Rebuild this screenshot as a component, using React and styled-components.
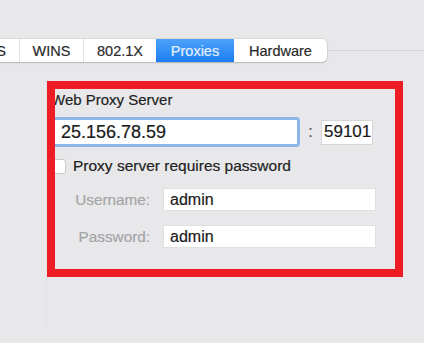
import React from "react";
import styled, { createGlobalStyle } from "styled-components";

const GlobalStyle = createGlobalStyle`
  html, body {
    margin: 0;
    padding: 0;
    background: #e8e8ea;
    font-family: "Liberation Sans", Arial, sans-serif;
  }
`;

const Page = styled.div`
  width: 424px;
  height: 343px;
  overflow: hidden;
  padding-top: 39px;
  box-sizing: border-box;
`;

const TabRow = styled.div`
  display: flex;
  align-items: stretch;
  height: 23px;
`;

const TabStrip = styled.div`
  display: flex;
  background: #ffffff;
  border-radius: 0 5px 5px 0;
  box-shadow: 0 0 0 0.5px rgba(0, 0, 0, 0.12), 0 1px 1.5px rgba(0, 0, 0, 0.18);
`;

const Tab = styled.div`
  width: ${(p) => p.$w}px;
  display: flex;
  align-items: center;
  justify-content: ${(p) => (p.$clip ? "flex-end" : "center")};
  padding-right: ${(p) => (p.$clip ? "13px" : "0")};
  box-sizing: border-box;
  overflow: hidden;
  font-size: 14.5px;
  color: ${(p) => (p.$active ? "#e4f0ff" : "#2b2b2b")};
  -webkit-text-stroke: 0.2px ${(p) => (p.$active ? "#e4f0ff" : "#2b2b2b")};
  background: ${(p) =>
    p.$active ? "linear-gradient(#4ea3fa, #1b7df0)" : "transparent"};
  border-left: ${(p) => (p.$first || p.$active || p.$afterActive ? "none" : "1px solid #e2e2e2")};
  white-space: nowrap;
`;

const TabLine = styled.div`
  flex: 1;
  align-self: center;
  height: 11px;
  border-top: 1px solid #d6d6d8;
  margin-top: 11px;
`;

const Group = styled.div`
  margin: 19px 0 0 46px;
  border-left: 1px solid #e0e0e2;
  height: 244px;
`;

const Frame = styled.div`
  width: 356px;
  height: 196px;
  box-sizing: border-box;
  border: 8px solid #ee1c25;
  overflow: hidden;
`;

const Form = styled.div`
  display: flex;
  flex-direction: column;
  margin-left: -4px;
  padding-top: 2px;
  -webkit-text-stroke: 0.2px currentColor;
`;

const Title = styled.div`
  font-size: 15px;
  line-height: 17px;
  color: #1f1f1f;
`;

const HostRow = styled.div`
  display: flex;
  align-items: center;
  margin-top: 9px;
  height: 30px;
`;

const HostField = styled.div`
  width: 253px;
  height: 30px;
  box-sizing: border-box;
  border: 3px solid #8cb6e6;
  border-radius: 4px;
  background: #ffffff;
  display: flex;
  align-items: center;
  padding-left: 11px;
  font-size: 18px;
  color: #1a1a1a;
  margin-left: -4px;
`;

const Colon = styled.div`
  width: 21px;
  text-align: center;
  font-size: 16px;
  color: #555;
`;

const PortField = styled.div`
  width: 52px;
  height: 25px;
  box-sizing: border-box;
  border: 1px solid #d6d6d6;
  background: #ffffff;
  display: flex;
  align-items: center;
  padding-left: 2px;
  font-size: 17px;
  color: #1a1a1a;
  overflow: hidden;
`;

const CheckRow = styled.div`
  display: flex;
  align-items: center;
  gap: 7px;
  margin-top: 11px;
  height: 16px;
`;

const Box = styled.div`
  width: 15px;
  height: 15px;
  box-sizing: border-box;
  background: #ffffff;
  border: 1px solid #c9c9c9;
  border-radius: 3px;
`;

const CheckLabel = styled.div`
  font-size: 15.5px;
  color: #222222;
`;

const FieldRow = styled.div`
  display: flex;
  align-items: center;
  gap: 13px;
  margin-top: 14px;
  height: 23px;
`;

const FieldLabel = styled.div`
  width: 99px;
  text-align: right;
  font-size: 15.3px;
  color: #a4a4a6;
`;

const TextField = styled.div`
  width: 213px;
  height: 23px;
  box-sizing: border-box;
  border: 1px solid #e0e0e0;
  background: #ffffff;
  display: flex;
  align-items: center;
  padding-left: 6px;
  font-size: 16px;
  color: #1a1a1a;
`;

const tabs = [
  { name: "DNS", w: 19, clip: true },
  { name: "WINS", w: 64 },
  { name: "802.1X", w: 73 },
  { name: "Proxies", w: 78, active: true },
  { name: "Hardware", w: 93 },
];

export default function App() {
  return (
    <>
      <GlobalStyle />
      <Page>
        <TabRow>
          <TabStrip>
            {tabs.map((t, i) => (
              <Tab
                key={t.name}
                $w={t.w}
                $clip={t.clip}
                $active={t.active}
                $first={i === 0}
                $afterActive={i > 0 && tabs[i - 1].active}
              >
                {t.name}
              </Tab>
            ))}
          </TabStrip>
          <TabLine />
        </TabRow>
        <Group>
          <Frame>
            <Form>
              <Title>Web Proxy Server</Title>
              <HostRow>
                <HostField>25.156.78.59</HostField>
                <Colon>:</Colon>
                <PortField>59101</PortField>
              </HostRow>
              <CheckRow>
                <Box />
                <CheckLabel>Proxy server requires password</CheckLabel>
              </CheckRow>
              <FieldRow>
                <FieldLabel>Username:</FieldLabel>
                <TextField>admin</TextField>
              </FieldRow>
              <FieldRow>
                <FieldLabel>Password:</FieldLabel>
                <TextField>admin</TextField>
              </FieldRow>
            </Form>
          </Frame>
        </Group>
      </Page>
    </>
  );
}
